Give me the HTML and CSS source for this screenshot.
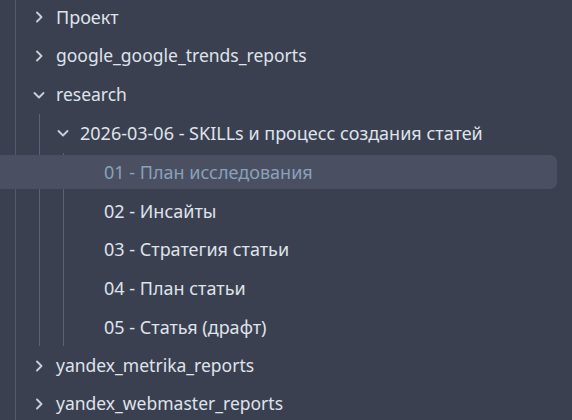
FILE: index.html
```html
<!DOCTYPE html>
<html>
<head>
<meta charset="utf-8">
<link rel="stylesheet" href="styles.css">
</head>
<body>
<div class="tree">
  <div class="row lvl0"><span class="chev"><svg viewBox="0 0 12 12"><path d="M4 1.5 L8.5 6 L4 10.5"/></svg></span><span class="label cy">Проект</span></div>
  <div class="row lvl0"><span class="chev"><svg viewBox="0 0 12 12"><path d="M4 1.5 L8.5 6 L4 10.5"/></svg></span><span class="label">google_google_trends_reports</span></div>
  <div class="group">
    <div class="row lvl0"><span class="chev"><svg viewBox="0 0 12 12"><path d="M1.5 4 L6 8.5 L10.5 4"/></svg></span><span class="label">research</span></div>
    <div class="children g1">
      <div class="row lvl1"><span class="chev"><svg viewBox="0 0 12 12"><path d="M1.5 4 L6 8.5 L10.5 4"/></svg></span><span class="label cy">2026-03-06 - SKILLs и процесс создания статей</span></div>
      <div class="children g2">
        <div class="row lvl2 selected"><span class="label cy">01 - План исследования</span></div>
        <div class="row lvl2"><span class="label cy">02 - Инсайты</span></div>
        <div class="row lvl2"><span class="label cy">03 - Стратегия статьи</span></div>
        <div class="row lvl2"><span class="label cy">04 - План статьи</span></div>
        <div class="row lvl2"><span class="label cy">05 - Статья (драфт)</span></div>
      </div>
    </div>
  </div>
  <div class="row lvl0"><span class="chev"><svg viewBox="0 0 12 12"><path d="M4 1.5 L8.5 6 L4 10.5"/></svg></span><span class="label">yandex_metrika_reports</span></div>
  <div class="row lvl0"><span class="chev"><svg viewBox="0 0 12 12"><path d="M4 1.5 L8.5 6 L4 10.5"/></svg></span><span class="label">yandex_webmaster_reports</span></div>
</div>
</body>
</html>
```
FILE: styles.css
```css
html, body {
  margin: 0;
  padding: 0;
  background: #3b4051;
  height: 100%;
  overflow: hidden;
}
body {
  font-family: "Noto Sans", "Open Sans", sans-serif;
  font-size: 17.5px;
  color: #dfe3ea;
}
.tree {
  position: relative;
  margin-top: -2px;
  padding-right: 15px;
  min-height: 430px;
  border-left: 1px solid #545a6b;
  margin-left: 15px;
}
.row {
  position: relative;
  height: 38.7px;
  display: flex;
  align-items: center;
  white-space: nowrap;
}
.row.selected::before {
  content: "";
  position: absolute;
  left: -63px;
  right: 0;
  top: 2.5px;
  bottom: 2.2px;
  background: #4a5062;
  border-radius: 0 7px 7px 0;
  z-index: 0;
}
.row > * { position: relative; z-index: 1; }
.lvl0 { padding-left: 17px; }
.lvl1 { padding-left: 17px; }
.chev {
  width: 12px;
  height: 12px;
  margin-right: 11px;
  display: flex;
}
.chev svg {
  width: 12px;
  height: 12px;
  fill: none;
  stroke: #c9cdd6;
  stroke-width: 1.9;
  stroke-linecap: round;
  stroke-linejoin: round;
}
.label { line-height: 1; }
.label.cy { font-size: 18px; }
.selected .label { color: #8aa0ba; }
.children {
  position: relative;
}
.g1 {
  margin-left: 23px;
  border-left: 1px solid #5c6274;
}
.g2 {
  margin-left: 23px;
  border-left: 1px solid #5c6274;
}
.g2 .row { padding-left: 40px; }
.g2 .row.selected::before { left: -87px; }
```
